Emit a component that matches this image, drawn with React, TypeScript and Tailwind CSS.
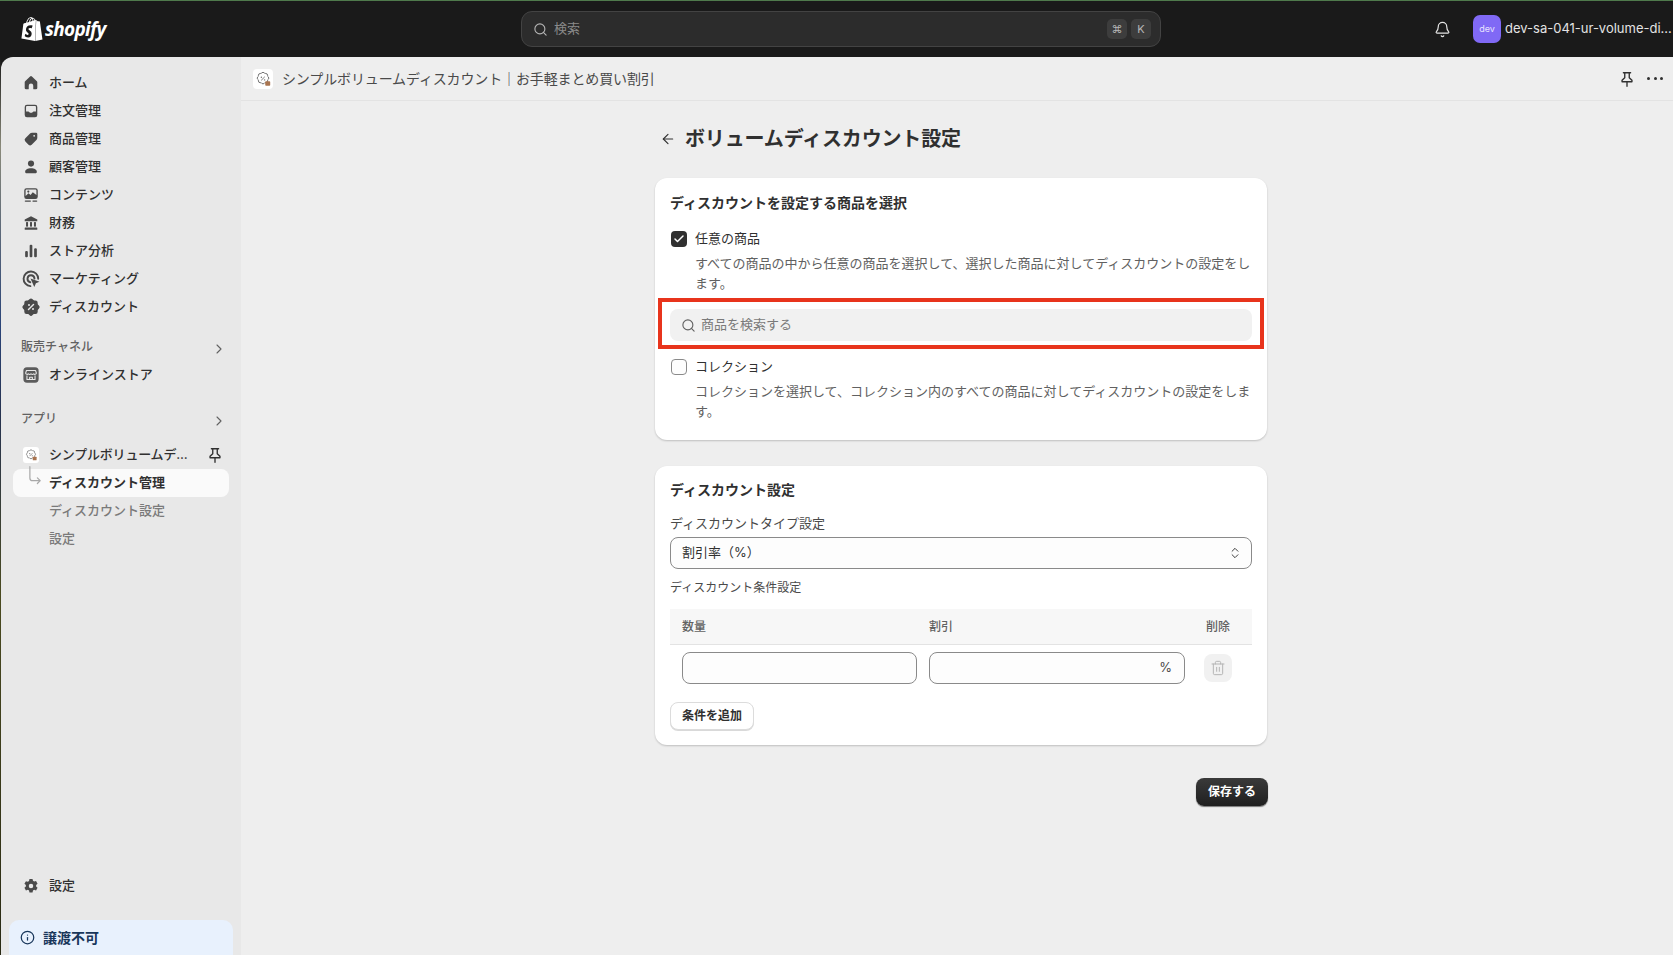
import React from "react";
import { Search, Bell, ChevronRight, ArrowLeft, Info, ChevronsUpDown, Check, Trash2 } from "lucide-react";

const Ic = ({ children, className = "w-[18px] h-[18px]" }: { children: React.ReactNode; className?: string }) => (
  <svg viewBox="0 0 20 20" fill="#4a4a4a" className={className}>{children}</svg>
);

const Home = () => <Ic><path d="M11.035 2.772a1.5 1.5 0 0 0-2.07 0l-5.5 5.25A1.5 1.5 0 0 0 3 9.107V15.5A1.5 1.5 0 0 0 4.5 17h2.25a.75.75 0 0 0 .75-.75V13a2.5 2.5 0 0 1 5 0v3.25c0 .414.336.75.75.75h2.25a1.5 1.5 0 0 0 1.5-1.5V9.107a1.5 1.5 0 0 0-.465-1.085z" /></Ic>;
const Orders = () => <Ic><path fillRule="evenodd" d="M5.5 3A2.5 2.5 0 0 0 3 5.5v9A2.5 2.5 0 0 0 5.5 17h9a2.5 2.5 0 0 0 2.5-2.5v-9A2.5 2.5 0 0 0 14.5 3zM4.5 10.5v-5a1 1 0 0 1 1-1h9a1 1 0 0 1 1 1v5h-2.6a1 1 0 0 0-.9.55l-.2.4a1 1 0 0 1-.9.55H9.1a1 1 0 0 1-.9-.55l-.2-.4a1 1 0 0 0-.9-.55z" /></Ic>;
const Tag = () => <Ic><path fillRule="evenodd" d="M11 3h4.5A1.5 1.5 0 0 1 17 4.5V9a2.5 2.5 0 0 1-.73 1.77l-5.5 5.5a2.5 2.5 0 0 1-3.54 0l-3.5-3.5a2.5 2.5 0 0 1 0-3.54l5.5-5.5A2.5 2.5 0 0 1 11 3zm2.5 2.5a1 1 0 1 0 0 2 1 1 0 0 0 0-2z" /></Ic>;
const Person = () => <Ic><circle cx="10" cy="6.2" r="3.4" /><path d="M3.5 15.2c0-2.3 2.7-3.9 6.5-3.9s6.500 1.600 6.500 3.900c0 1-.8 1.800-1.800 1.800H5.300c-1 0-1.800-.8-1.800-1.800z" /></Ic>;
const Content = () => <Ic><path fillRule="evenodd" d="M5 2.500h10A2.500 2.500 0 0 1 17.500 5v7a2.500 2.500 0 0 1-2.500 2.500H5A2.500 2.500 0 0 1 2.500 12V5A2.500 2.500 0 0 1 5 2.500zM4 11l3.200-3 2.300 2 2.500-3L16 10V5a1 1 0 0 0-1-1H5a1 1 0 0 0-1 1zM7 5a1.200 1.200 0 1 0 0 2.400A1.200 1.200 0 0 0 7 5z" /><rect x="3" y="16" width="7" height="1.600" rx=".8" /><rect x="11.500" y="16" width="5.500" height="1.600" rx=".8" /></Ic>;
const Finance = () => <Ic><path d="M10 2.500 3 6.200V8h14V6.200z" /><rect x="4.500" y="9" width="2.200" height="5" /><rect x="8.900" y="9" width="2.200" height="5" /><rect x="13.300" y="9" width="2.200" height="5" /><rect x="3" y="15" width="14" height="2.500" rx=".6" /></Ic>;
const Analytics = () => <Ic><rect x="3.500" y="10" width="3" height="7" rx="1.200" /><rect x="8.500" y="3" width="3" height="14" rx="1.200" /><rect x="13.500" y="7" width="3" height="10" rx="1.200" /></Ic>;
const Marketing = () => (
  <Ic className="w-5 h-5">
    <path d="M9.400 17.100A7.300 7.300 0 1 1 17.200 9.800" fill="none" stroke="#4a4a4a" strokeWidth="1.900" strokeLinecap="round" />
    <path d="M9.300 13.200A3.500 3.500 0 1 1 13.500 9.600" fill="none" stroke="#4a4a4a" strokeWidth="1.900" strokeLinecap="round" />
    <path d="m9.500 9.500 9 3.200-3.600 1.500-1.600 3.800z" />
  </Ic>
);
const Discount = () => (
  <Ic className="w-5 h-5">
    <path d="M8.400 2.300a2.200 2.200 0 0 1 3.200 0l.8.800c.3.300.6.400 1 .400h1.100a2.200 2.200 0 0 1 2.200 2.200v1.100c0 .4.100.7.400 1l.8.800a2.200 2.200 0 0 1 0 3.200l-.8.800c-.3.300-.4.600-.4 1v1.100a2.200 2.200 0 0 1-2.200 2.200h-1.100c-.4 0-.7.100-1 .4l-.8.800a2.200 2.200 0 0 1-3.200 0l-.8-.8c-.3-.3-.6-.4-1-.4H5.500a2.200 2.200 0 0 1-2.200-2.200v-1.100c0-.4-.1-.7-.4-1l-.8-.8a2.200 2.200 0 0 1 0-3.200l.8-.8c.3-.3.4-.6.4-1V5.700a2.200 2.200 0 0 1 2.200-2.200h1.100c.4 0 .7-.1 1-.4z" />
    <path d="m7.500 12.500 5-5" stroke="#e8e8e8" strokeWidth="1.500" strokeLinecap="round" />
    <circle cx="8" cy="8" r="1" fill="#e8e8e8" /><circle cx="12" cy="12" r="1" fill="#e8e8e8" />
  </Ic>
);
const Store = () => (
  <svg viewBox="0 0 20 20" className="w-[18px] h-[18px]">
    <rect x="1.500" y="1.500" width="17" height="17" rx="4" fill="#5c5c5c" />
    <path d="M5 5h10l1 3a1.800 1.800 0 0 1-3 .8 2.200 2.200 0 0 1-3 0 2.200 2.200 0 0 1-3 0 1.800 1.800 0 0 1-3-.8zM5.500 10.500V15h9v-4.500M8.500 15v-2.500h3V15" fill="none" stroke="#e8e8e8" strokeWidth="1.200" strokeLinejoin="round" />
  </svg>
);
const Gear = () => <Ic><path fillRule="evenodd" d="M8.300 2.200h3.400l.5 2.100 1.300.8 2.100-.6 1.700 2.900-1.600 1.500v1.600l1.600 1.500-1.700 2.900-2.100-.6-1.300.8-.5 2.100H8.300l-.5-2.100-1.300-.8-2.100.6-1.700-2.900 1.600-1.500V9l-1.600-1.500 1.700-2.900 2.100.6 1.300-.8zM10 7.500a2.500 2.500 0 1 0 0 5 2.500 2.500 0 0 0 0-5z" /></Ic>;
const Pin = ({ className = "w-[18px] h-[18px]" }: { className?: string }) => (
  <svg viewBox="0 0 20 20" fill="none" stroke="#303030" strokeWidth="1.500" strokeLinejoin="round" strokeLinecap="round" className={className}>
    <path d="M6 3h8M7.500 3v5.500L4.500 11.500v1.500h11v-1.500l-3-3V3M10 13v5" />
  </svg>
);
const AppBadge = ({ className }: { className: string }) => (
  <svg viewBox="0 0 20 20" className={className}>
    <path d="M8.600 3.200a2 2 0 0 1 2.800 0l.6.600 1.100.1a2 2 0 0 1 2 2l.1 1.100.6.600a2 2 0 0 1 0 2.800l-.6.600-.1 1.100a2 2 0 0 1-2 2l-1.100.1-.6.600a2 2 0 0 1-2.800 0l-.6-.6-1.100-.1a2 2 0 0 1-2-2l-.1-1.100-.6-.6a2 2 0 0 1 0-2.800l.6-.6.1-1.100a2 2 0 0 1 2-2l1.100-.1z" fill="none" stroke="#707070" strokeWidth="1.100" />
    <path d="m8 11.500 4-4" stroke="#707070" strokeWidth="1" />
    <circle cx="8.200" cy="8" r=".8" fill="#707070" /><circle cx="11.800" cy="11" r=".8" fill="#707070" />
    <rect x="12.500" y="12.500" width="5.500" height="5" rx=".8" fill="#a9744f" />
  </svg>
);
const Shopify = () => (
  <svg viewBox="0 0 24 24" fill="#fff" className="-ml-[1px] h-6 w-6">
    <path d="M15.337 23.979l7.216-1.561s-2.604-17.613-2.625-17.73c-.018-.116-.114-.192-.211-.192s-1.929-.136-1.929-.136-1.275-1.274-1.439-1.411c-.045-.037-.075-.057-.121-.074l-.914 21.104h.023zM11.71 11.305s-.81-.424-1.774-.424c-1.447 0-1.504.906-1.504 1.141 0 1.232 3.24 1.715 3.24 4.629 0 2.295-1.44 3.76-3.406 3.76-2.354 0-3.54-1.465-3.54-1.465l.646-2.086s1.245 1.066 2.28 1.066c.675 0 .975-.545.975-.932 0-1.619-2.654-1.694-2.654-4.359-.034-2.237 1.571-4.416 4.827-4.416 1.257 0 1.875.361 1.875.361l-.945 2.715-.02.01zM11.17.83c.136 0 .271.038.405.135-.984.465-2.064 1.639-2.508 3.992-.656.213-1.293.405-1.889.578C7.697 3.75 8.951.84 11.17.84V.83zm1.235 2.949v.135c-.754.232-1.583.484-2.394.736.466-1.777 1.333-2.645 2.085-2.971.193.501.309 1.176.309 2.1zm.539-2.234c.694.074 1.141.867 1.429 1.755-.349.114-.735.231-1.158.366v-.252c0-.752-.096-1.371-.271-1.871v.002zm2.992 1.289c-.02 0-.06.021-.078.021s-.289.075-.714.21c-.423-1.233-1.176-2.37-2.508-2.37h-.115C12.135.209 11.669 0 11.265 0 8.159 0 6.675 3.877 6.21 5.846c-1.194.365-2.063.636-2.16.674-.675.213-.694.232-.772.87-.075.462-1.83 14.063-1.83 14.063L15.009 24l.927-21.166z" />
  </svg>
);

const nav: [React.ReactNode, string][] = [
  [<Home />, "ホーム"],
  [<Orders />, "注文管理"],
  [<Tag />, "商品管理"],
  [<Person />, "顧客管理"],
  [<Content />, "コンテンツ"],
  [<Finance />, "財務"],
  [<Analytics />, "ストア分析"],
  [<Marketing />, "マーケティング"],
  [<Discount />, "ディスカウント"],
];

const Row = ({ icon, label }: { icon: React.ReactNode; label: string }) => (
  <div className="flex h-7 items-center pl-5">
    <span className="flex w-5 justify-center">{icon}</span>
    <span className="ml-[8px] text-[13px] font-medium text-[#303030]">{label}</span>
  </div>
);

const Group = ({ label, className }: { label: string; className: string }) => (
  <div className={`flex h-7 items-center justify-between pl-[20px] pr-[14px] ${className}`}>
    <span className="text-[12px] font-medium text-[#616161] -mt-1">{label}</span>
    <ChevronRight size={16} strokeWidth={1.6} className="text-[#616161]" />
  </div>
);

const Checkbox = ({ checked }: { checked?: boolean }) =>
  checked ? (
    <span className="ml-px flex h-4 w-4 shrink-0 items-center justify-center rounded-[4px] bg-[#303030]">
      <Check size={12} strokeWidth={3} className="text-white" />
    </span>
  ) : (
    <span className="ml-px h-4 w-4 shrink-0 rounded-[4px] border border-[#8a8a8a] bg-[#fdfdfd]" />
  );

const Option = ({ checked, label, desc }: { checked?: boolean; label: string; desc: string }) => (
  <div>
    <div className="flex h-4 items-center gap-[8px]">
      <Checkbox checked={checked} />
      <span className="text-[13px] text-[#303030]">{label}</span>
    </div>
    <p className="mt-[6px] pl-[25px] text-[13px] leading-5 text-[#616161]">{desc}</p>
  </div>
);

export default function App() {
  return (
    <div className="flex h-screen w-full flex-col overflow-hidden bg-[#1a1a1a] font-['Inter','Noto_Sans_CJK_JP',sans-serif]">
      <div className="h-px shrink-0 bg-[#4f7a4c]" />
      <div className="flex h-[56px] shrink-0 items-center pl-[21px]">
        <div className="flex w-[500px] shrink-0 items-center gap-[1px]">
          <Shopify />
          <span className="font-['Open_Sans',sans-serif] text-[19px] font-bold italic leading-none tracking-[-0.7px] text-white">shopify</span>
        </div>
        <div className="flex h-[36px] w-[640px] shrink-0 items-center rounded-[11px] border border-[#434343] bg-[#2c2c2c] pl-[11px] pr-[9px]">
          <Search size={15} strokeWidth={1.8} className="text-[#b5b5b5]" />
          <span className="ml-[6px] text-[13px] text-[#8a8a8a]">検索</span>
          <span className="ml-auto flex h-5 w-5 items-center justify-center rounded-[5px] bg-[#3d3d3d] text-[11px] text-[#b5b5b5]">⌘</span>
          <span className="ml-1 flex h-5 w-5 items-center justify-center rounded-[5px] bg-[#3d3d3d] text-[11px] text-[#b5b5b5]">K</span>
        </div>
        <Bell size={17} strokeWidth={1.7} className="ml-[273px] shrink-0 text-[#e3e3e3]" />
        <span className="ml-[22px] flex h-7 w-7 shrink-0 items-center justify-center rounded-[7px] bg-[#8069f5] text-[9px] text-[#e9e4ff]">dev</span>
        <span className="ml-[4px] whitespace-nowrap text-[13px] text-[#e3e3e3]">dev-sa-041-ur-volume-di...</span>
      </div>

      <div className="flex min-h-0 flex-1">
        <div className="w-px shrink-0 bg-[linear-gradient(180deg,#1a1a1a_0%,#8a8a7a_10%,#2a4478_30%,#26324f_40%,#4a4a20_60%,#2a2a14_100%)]" />
        <aside className="flex w-[240px] shrink-0 flex-col overflow-hidden rounded-tl-[12px] bg-[#e8e8e8] pt-3">
          {nav.map(([icon, label]) => <Row key={label} icon={icon} label={label} />)}
          <Group label="販売チャネル" className="mt-[14px]" />
          <div className="-mt-[2px]"><Row icon={<Store />} label="オンラインストア" /></div>
          <Group label="アプリ" className="mt-[18px]" />
          <div className="mt-[6px] flex h-7 items-center pl-5 pr-[17px]">
            <span className="flex w-5 justify-center">
              <span className="flex h-4 w-4 items-center justify-center rounded-[3px] bg-white"><AppBadge className="h-[14px] w-[14px]" /></span>
            </span>
            <span className="ml-2 text-[13px] font-medium tracking-[-0.2px] text-[#303030]">シンプルボリュームデ...</span>
            <Pin className="ml-auto h-[18px] w-[18px]" />
          </div>
          <div className="relative mx-3 flex h-7 items-center rounded-[8px] bg-[#fafafa] pl-9 text-[13px] font-semibold text-[#303030]">
            ディスカウント管理
            <svg viewBox="0 0 16 20" fill="none" stroke="#a8a8a8" strokeWidth="1.300" strokeLinecap="round" strokeLinejoin="round" className="absolute left-[15px] top-[-5px] h-[24px] w-[15px]">
              <path d="M2 0v12a3 3 0 0 0 3 3h8M10 12l3 3-3 3" />
            </svg>
          </div>
          <div className="flex h-7 items-center pl-12 text-[13px] font-medium text-[#7a7a7a]">ディスカウント設定</div>
          <div className="flex h-7 items-center pl-12 text-[13px] font-medium text-[#7a7a7a]">設定</div>
          <div className="mt-auto"><Row icon={<Gear />} label="設定" /></div>
          <div className="mx-2 mt-5 flex h-[35px] items-center gap-2 rounded-t-[10px] bg-[#e8f1fd] pl-[11px] text-[14px] font-semibold text-[#18365a]">
            <Info size={15} strokeWidth={2} />
            譲渡不可
          </div>
        </aside>

        <main className="flex min-w-0 flex-1 flex-col bg-[#eeeeee]">
          <div className="flex h-[44px] shrink-0 items-center border-b border-[#e3e3e3] pl-3 pr-[10px]">
            <span className="flex h-5 w-5 items-center justify-center rounded-[4px] bg-white"><AppBadge className="h-[18px] w-[18px]" /></span>
            <span className="ml-[9px] text-[14px] tracking-[-0.13px] text-[#4a4a4a]">シンプルボリュームディスカウント｜お手軽まとめ買い割引</span>
            <Pin className="ml-auto h-[18px] w-[18px]" />
            <span className="ml-[11px] flex w-4 items-center justify-between">
              <span className="h-[3px] w-[3px] rounded-full bg-[#303030]" />
              <span className="h-[3px] w-[3px] rounded-full bg-[#303030]" />
              <span className="h-[3px] w-[3px] rounded-full bg-[#303030]" />
            </span>
          </div>

          <div className="ml-[414px] w-[613px] pt-[21px]">
            <div className="flex h-[34px] items-center gap-[9px] pl-[5px]">
              <ArrowLeft size={16} strokeWidth={1.7} className="text-[#303030]" />
              <h1 className="text-[20px] font-bold tracking-[-0.15px] text-[#303030]">ボリュームディスカウント設定</h1>
            </div>

            <section className="mt-[22px] h-[262px] w-[612px] rounded-[12px] bg-white px-[15px] pt-[15px] shadow-[0_1px_2px_rgba(0,0,0,0.2)]">
              <h2 className="text-[14px] font-bold leading-5 text-[#303030]">ディスカウントを設定する商品を選択</h2>
              <div className="mt-[18px]">
                <Option checked label="任意の商品" desc="すべての商品の中から任意の商品を選択して、選択した商品に対してディスカウントの設定をします。" />
              </div>
              <div className="-mx-3 mt-[5px] border-[4px] border-[#e8341c] px-[8px] pt-[7px] pb-[4px]">
                <div className="flex h-8 items-center gap-[5px] rounded-[8px] bg-[#f1f1f1] pl-[11px]">
                  <Search size={15} strokeWidth={1.8} className="text-[#616161]" />
                  <span className="text-[13px] text-[#7a7a7a]">商品を検索する</span>
                </div>
              </div>
              <div className="mt-[10px]">
                <Option label="コレクション" desc="コレクションを選択して、コレクション内のすべての商品に対してディスカウントの設定をします。" />
              </div>
            </section>

            <section className="mt-[26px] h-[279px] w-[612px] rounded-[12px] bg-white px-[15px] pt-[14px] shadow-[0_1px_2px_rgba(0,0,0,0.2)]">
              <h2 className="text-[14px] font-bold leading-5 text-[#303030]">ディスカウント設定</h2>
              <div className="mt-[13px] text-[13px] leading-5 text-[#4a4a4a]">ディスカウントタイプ設定</div>
              <div className="mt-[4px] flex h-8 items-center justify-between rounded-[8px] border border-[#8a8a8a] bg-[#fdfdfd] pl-[11px] pr-[9px] text-[13px] text-[#303030]">
                割引率（%）
                <ChevronsUpDown size={14} strokeWidth={1.6} />
              </div>
              <div className="mt-[9px] text-[12px] leading-5 text-[#4a4a4a]">ディスカウント条件設定</div>
              <div className="mt-[11px] flex h-[36px] items-center border-b border-[#e3e3e3] bg-[#f7f7f7] text-[12px] font-medium text-[#616161]">
                <span className="ml-3 w-[247px]">数量</span>
                <span className="w-[277px]">割引</span>
                <span>削除</span>
              </div>
              <div className="mt-[7px] flex items-center pl-3">
                <div className="h-8 w-[235px] rounded-[8px] border border-[#8a8a8a] bg-[#fdfdfd]" />
                <div className="ml-3 flex h-8 w-[256px] items-center justify-end rounded-[8px] border border-[#8a8a8a] bg-[#fdfdfd] pr-3 text-[13px] text-[#4a4a4a]">%</div>
                <div className="ml-[19px] flex h-7 w-7 items-center justify-center rounded-[8px] bg-[#f1f1f1]">
                  <Trash2 size={16} strokeWidth={1.5} className="text-[#b5b5b5]" />
                </div>
              </div>
              <div className="mt-[18px] flex h-7 w-[84px] items-center justify-center rounded-[8px] border border-[#dcdcdc] bg-white text-[12px] font-semibold text-[#303030] shadow-[0_1px_0_rgba(0,0,0,0.15)]">条件を追加</div>
            </section>

            <div className="mt-[33px] flex justify-end">
              <div className="flex h-7 w-[72px] items-center justify-center rounded-[8px] bg-[linear-gradient(180deg,#3a3a3a,#1f1f1f)] text-[12px] font-semibold text-white shadow-[0_1px_1px_rgba(0,0,0,0.5)]">保存する</div>
            </div>
          </div>
        </main>
      </div>
    </div>
  );
}
